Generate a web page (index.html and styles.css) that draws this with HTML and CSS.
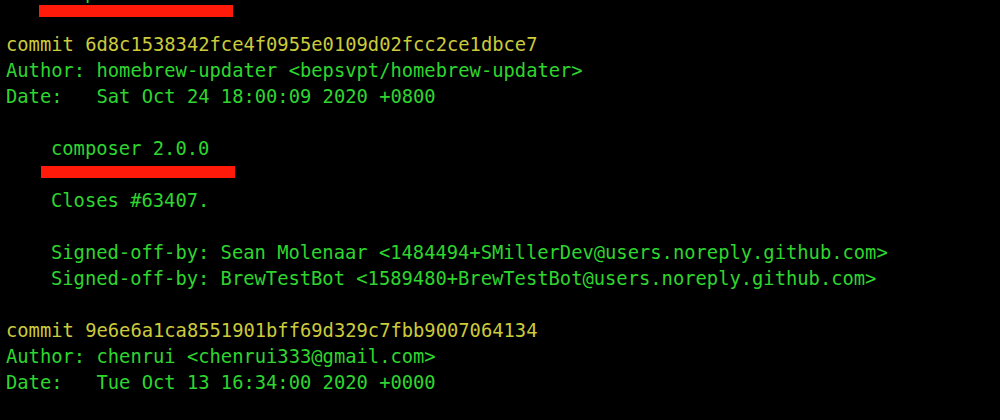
FILE: index.html
```html
<!DOCTYPE html>
<html>
<head>
<meta charset="utf-8">
<link rel="stylesheet" href="styles.css">
</head>
<body>
<div class="term">
  <div class="line green indent marked mark-top">composer 2.0.1</div>
  <div class="line blank"></div>
  <div class="line yellow">commit 6d8c1538342fce4f0955e0109d02fcc2ce1dbce7</div>
  <div class="line green">Author: homebrew-updater &lt;bepsvpt/homebrew-updater&gt;</div>
  <div class="line green">Date:   Sat Oct 24 18:00:09 2020 +0800</div>
  <div class="line blank"></div>
  <div class="line green indent marked">composer 2.0.0</div>
  <div class="line blank"></div>
  <div class="line green indent">Closes #63407.</div>
  <div class="line blank"></div>
  <div class="line green indent">Signed-off-by: Sean Molenaar &lt;1484494+SMillerDev@users.noreply.github.com&gt;</div>
  <div class="line green indent">Signed-off-by: BrewTestBot &lt;1589480+BrewTestBot@users.noreply.github.com&gt;</div>
  <div class="line blank"></div>
  <div class="line yellow">commit 9e6e6a1ca8551901bff69d329c7fbb9007064134</div>
  <div class="line green">Author: chenrui &lt;chenrui333@gmail.com&gt;</div>
  <div class="line green">Date:   Tue Oct 13 16:34:00 2020 +0000</div>
</div>
</body>
</html>
```

FILE: styles.css
```css
html, body {
  margin: 0;
  padding: 0;
  background: #000;
  height: 100%;
  overflow: hidden;
}

.term {
  margin-top: -20px;
  padding-left: 6px;
  font-family: "DejaVu Sans Mono", "Liberation Mono", monospace;
  font-size: 18.8px;
  line-height: 26px;
}

.line {
  height: 26px;
  position: relative;
  white-space: pre;
}

.indent {
  padding-left: 45px;
}

.yellow {
  color: #cbcb3c;
}

.green {
  color: #2fd52f;
}

.marked::after {
  content: "";
  position: absolute;
  left: 35px;
  top: 30px;
  width: 194px;
  height: 12px;
  background: #ff1a0a;
}

.mark-top::after {
  left: 33px;
  top: 25px;
}
```
